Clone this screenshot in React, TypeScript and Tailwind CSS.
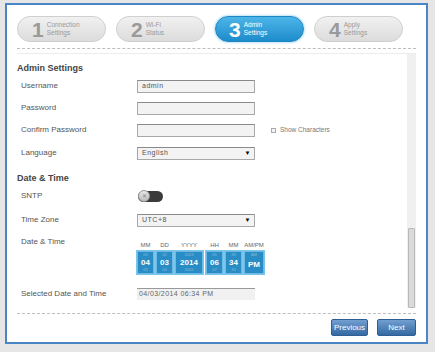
import React from "react";

const steps = [
  { n: "1", a: "Connection", b: "Settings" },
  { n: "2", a: "Wi-Fi", b: "Status" },
  { n: "3", a: "Admin", b: "Settings", active: true },
  { n: "4", a: "Apply", b: "Settings" },
];

function Field({ value, select }: { value?: string; select?: boolean }) {
  return (
    <div className="flex h-[13px] w-[118px] items-center justify-between border border-[#a8a8a8] border-t-[#8a8a8a] bg-[#f3f3f3] pl-[4px] pr-[3px] text-[7px] tracking-[0.5px] text-[#555]">
      <span>{value}</span>
      {select && <span className="text-[6px] text-black">▼</span>}
    </div>
  );
}

function Row({ label, children, className = "" }: { label: string; children?: React.ReactNode; className?: string }) {
  return (
    <div className={`flex h-[22px] items-center ${className}`}>
      <div className="w-[120px] pl-[4px] text-[8px] text-[#555]">{label}</div>
      {children}
    </div>
  );
}

type Cell = { label: string; top: string; val: string; bot: string; w: string };

function Wheel({ c }: { c: Cell }) {
  return (
    <div className={`flex h-[23px] flex-col items-center justify-between border border-[#6cbbe6] bg-[#2a8cc4] py-[1px] leading-none text-white ${c.w}`}>
      <span className="text-[4px] opacity-40">{c.top}</span>
      <span className="text-[8px] font-bold">{c.val}</span>
      <span className="text-[4px] opacity-40">{c.bot}</span>
    </div>
  );
}

const dateCells: Cell[] = [
  { label: "MM", top: "03", val: "04", bot: "05", w: "w-[17px]" },
  { label: "DD", top: "02", val: "03", bot: "04", w: "w-[17px]" },
  { label: "YYYY", top: "2013", val: "2014", bot: "2015", w: "w-[28px]" },
];
const timeCells: Cell[] = [
  { label: "HH", top: "05", val: "06", bot: "07", w: "w-[17px]" },
  { label: "MM", top: "33", val: "34", bot: "35", w: "w-[17px]" },
  { label: "AM/PM", top: "AM", val: "PM", bot: "", w: "w-[20px]" },
];

function Labels({ cells }: { cells: Cell[] }) {
  return (
    <div className="flex gap-[2px] px-[1px]">
      {cells.map((c, i) => (
        <span key={i} className={`text-center text-[6px] leading-[10px] text-[#666] ${c.w}`}>
          {c.label}
        </span>
      ))}
    </div>
  );
}

function Group({ cells }: { cells: Cell[] }) {
  return (
    <div className="flex gap-[2px] bg-[#7cc6ec] p-[1px]">
      {cells.map((c, i) => (
        <Wheel key={i} c={c} />
      ))}
    </div>
  );
}

export default function App() {
  return (
    <div className="h-[352px] w-[435px] bg-[#e6e6e6] px-[5px] pt-[3px] font-['Liberation_Sans',Arial,sans-serif]">
      <div className="h-[341px] w-[423px] border-2 border-[#4a86c6] bg-white px-[10px]">
        {/* wizard steps */}
        <div className="mt-[11px] flex gap-[10px]">
          {steps.map((s) => (
            <div
              key={s.n}
              className={
                s.active
                  ? "flex h-[26px] w-[89px] items-center rounded-full border border-[#1f86c4] bg-gradient-to-b from-[#4cb5e8] to-[#1b8ccb] pl-[13px] text-white shadow-[0_0_3px_#7cc4ea]"
                  : "flex h-[26px] w-[89px] items-center rounded-full border border-[#cfcfcf] bg-gradient-to-b from-[#f1f1f1] to-[#dcdcdc] pl-[14px] text-[#9a9a9a]"
              }
            >
              <span className="text-[21px] font-bold leading-none">{s.n}</span>
              <div className="ml-[3px] flex flex-col text-[6.5px] leading-[8px]">
                <span>{s.a}</span>
                <span>{s.b}</span>
              </div>
            </div>
          ))}
        </div>

        <div className="mt-[6px] border-t border-dashed border-[#bdbdbd]" />

        {/* scroll area */}
        <div className="mt-[4px] flex h-[255px] border-t border-[#ececec]">
          <div className="flex-1 pt-[8px]">
            <div className="h-[12px] text-[9px] font-bold leading-[12px] text-[#444]">Admin Settings</div>
            <div className="mt-[1px]">
              <Row label="Username">
                <Field value="admin" />
              </Row>
              <Row label="Password">
                <Field />
              </Row>
              <Row label="Confirm Password">
                <Field />
                <div className="ml-[16px] flex items-center gap-[4px] text-[6.5px] text-[#777]">
                  <span className="h-[5px] w-[5px] border border-[#aaa] bg-[#f4f4f4]" />
                  Show Characters
                </div>
              </Row>
              <Row label="Language" className="mt-[1px]">
                <Field value="English" select />
              </Row>
            </div>

            <div className="mt-[8px] h-[12px] text-[9px] font-bold leading-[12px] text-[#444]">Date &amp; Time</div>
            <div className="mt-[1px]">
              <Row label="SNTP">
                <div className="ml-[1px] flex h-[11px] w-[25px] items-center rounded-full bg-[#3b3b3b]">
                  <div className="flex h-[12px] w-[12px] items-center justify-center rounded-full border border-[#999] bg-gradient-to-b from-[#e8e8e8] to-[#bdbdbd] text-[6px] leading-none text-[#888]">
                    ✕
                  </div>
                </div>
              </Row>
              <Row label="Time Zone" className="mt-[2px]">
                <Field value="UTC+8" select />
              </Row>
            </div>
            <div className="mt-[5px] flex items-start">
              <div className="w-[119px] pl-[4px] text-[8px] leading-[12px] text-[#555]">Date &amp; Time</div>
              <div className="flex gap-[1px] pt-[4px]">
                <div className="flex flex-col">
                  <Labels cells={dateCells} />
                  <Group cells={dateCells} />
                </div>
                <div className="flex flex-col">
                  <Labels cells={timeCells} />
                  <Group cells={timeCells} />
                </div>
              </div>
            </div>
            <div className="mt-[8px]">
              <Row label="Selected Date and Time">
                <div className="flex h-[12px] w-[118px] items-center border-t border-[#999] bg-[#f1f1f1] pl-[2px] text-[7px] tracking-[0.4px] text-[#666]">
                  04/03/2014 06:34 PM
                </div>
              </Row>
            </div>
          </div>
          {/* scrollbar */}
          <div className="flex w-[9px] flex-col justify-end bg-[#f0f0f0] px-[1px]">
            <div className="h-[80px] rounded-[1px] border border-[#b9b9b9] bg-[#dadada]" />
          </div>
        </div>

        <div className="mt-[5px] border-t border-dashed border-[#bdbdbd]" />

        <div className="mt-[5px] flex justify-end gap-[9px]">
          <button className="h-[17px] w-[37px] rounded-[2px] border border-[#2e5f93] bg-gradient-to-b from-[#729fd0] to-[#3369a3] text-[8px] text-white">
            Previous
          </button>
          <button className="h-[17px] w-[39px] rounded-[2px] border border-[#2e5f93] bg-gradient-to-b from-[#729fd0] to-[#3369a3] text-[8px] text-white">
            Next
          </button>
        </div>
      </div>
    </div>
  );
}
